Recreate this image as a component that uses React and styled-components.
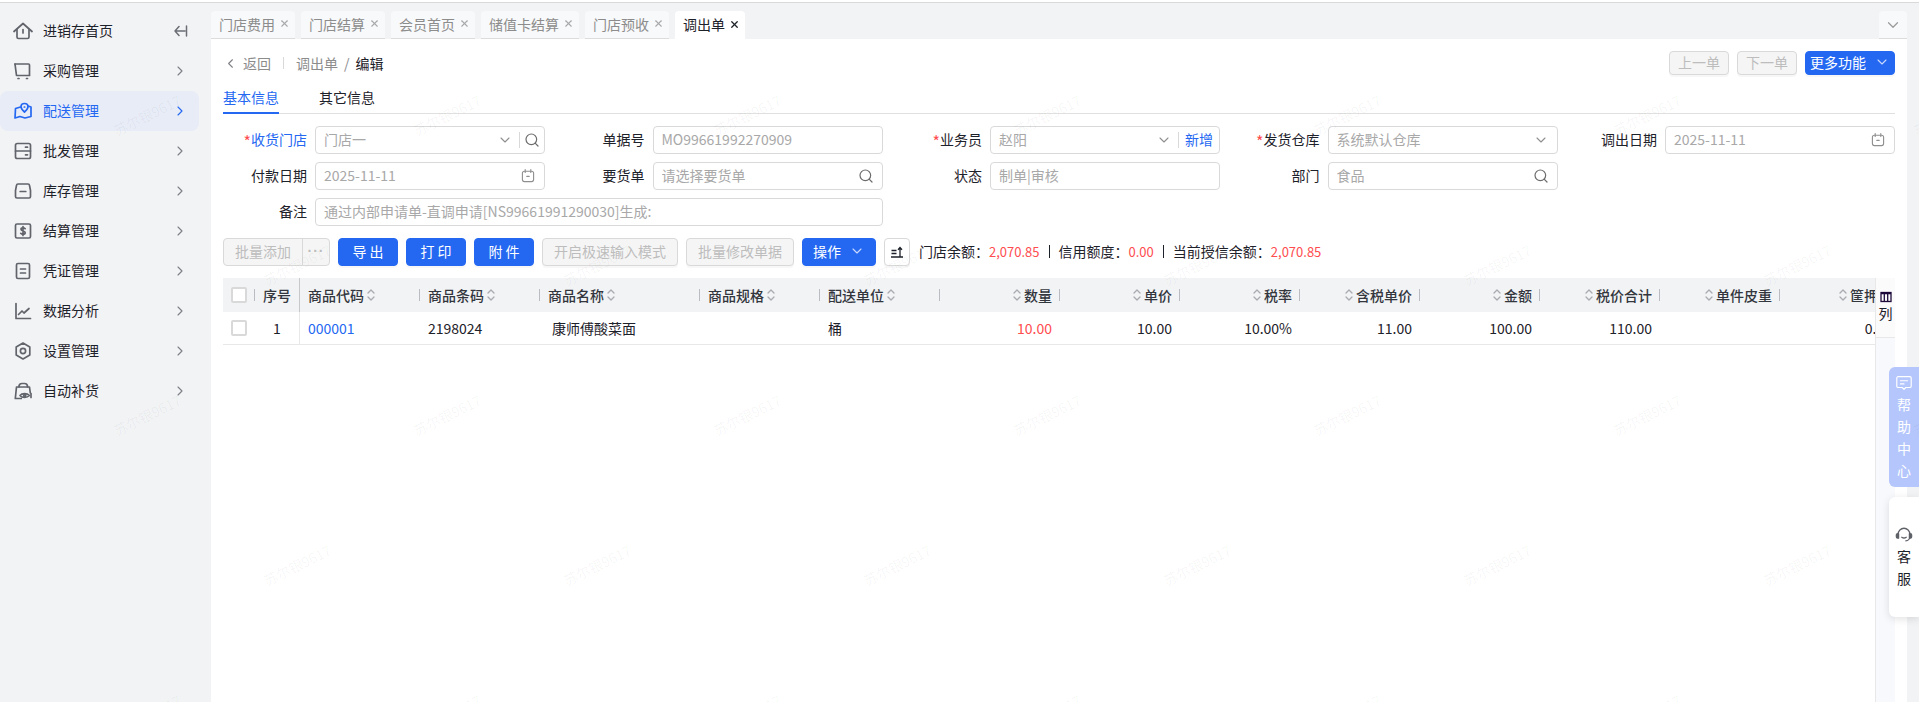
import React from 'react';
import styled, { createGlobalStyle } from 'styled-components';
import { ChevronDown, ChevronLeft, ChevronRight, Search, X } from 'lucide-react';

const GlobalStyle = createGlobalStyle`
  html, body {
    margin: 0;
    padding: 0;
    background: #fff;
    font-family: "Noto Sans CJK SC", "Noto Sans", sans-serif;
    font-size: 14px;
    color: #1d2129;
  }
  * { box-sizing: border-box; }
`;

const BLUE = '#2468f2';
const RED = '#ff4d4f';

const Svg = ({ size = 20, stroke = '#62646c', width = 1.7, children }) => (
  <svg width={size} height={size} viewBox="0 0 20 20" fill="none" stroke={stroke} strokeWidth={width} strokeLinecap="round" strokeLinejoin="round">
    {children}
  </svg>
);

const menuIcons = {
  home: <><path d="M1 10.500 10 2.500l9 8" /><path d="M4 8.500v7.500a1.500 1.500 0 0 0 1.500 1.500h9A1.500 1.500 0 0 0 16 16V8.500" /><path d="M10 8.500v3.500" /></>,
  cart: <><path d="M2 3h13.500a1 1 0 0 1 1 1v10" /><path d="M2 3l1.500 11.500h13" /><path d="M5 17.500h1M13.500 17.500h1" /></>,
  map: <><path d="M7.500 6 2.500 7.500l-.5 9.500 5-1.500 5 1.500 6-1.500V6l-3-1" /><path d="M11.500 2.500c-2 0-3.500 1.500-3.500 3.300 0 2 2 3.900 3.500 5.200 1.500-1.300 3.500-3.200 3.500-5.200 0-1.800-1.500-3.300-3.500-3.300z" /><path d="M11.300 6h.4" /></>,
  server: <><rect x="2.500" y="2.500" width="15" height="15" rx="1.800" /><path d="M2.500 10h15M12.500 13.800h2M12.500 6.200h2" /></>,
  box: <><path d="M5 3h10a1.500 1.500 0 0 1 1.500 1.300l1 5.200v6a1.500 1.500 0 0 1-1.500 1.500H4a1.500 1.500 0 0 1-1.500-1.500v-6l1-5.200A1.500 1.500 0 0 1 5 3z" /><path d="M7.200 10.500h5.600" /></>,
  money: <><rect x="2.500" y="3" width="15" height="14" rx="1.500" /><path d="M12.200 7.700c-.5-.6-1.200-.9-2.200-.9-1.100 0-2 .5-2 1.500 0 2.200 4.200 1.100 4.200 3.400 0 1-.9 1.600-2.200 1.600-1 0-1.800-.4-2.300-1M10 5.500v9" /></>,
  doc: <><rect x="3.500" y="2.500" width="13" height="15" rx="1.500" /><path d="M7.500 8h5M7.500 12h5" /></>,
  chart: <><path d="M3 2.500v15h14.500" /><path d="M5.500 13.500 9 10l2 2 5-4.500" /></>,
  gear: <><path d="M10 2 16.800 6v8L10 18 3.200 14V6z" /><circle cx="10" cy="10" r="2.600" /></>,
  bag: <><path d="M6 6V5a3 3 0 0 1 3-2.500h2.500A3 3 0 0 1 14.500 5v1" /><path d="M3.500 6h13l.8 6M3.500 6 2.300 17.500h6" /><path d="M7 14.500c2-2.500 7-2.500 9.500 0-2.500 2.500-7.500 2.500-9.500 0z" /><circle cx="11.700" cy="14.500" r="1" /><path d="M18 12.500v4" /></>,
};

const menu = [
  ['home', '进销存首页'],
  ['cart', '采购管理'],
  ['map', '配送管理'],
  ['server', '批发管理'],
  ['box', '库存管理'],
  ['money', '结算管理'],
  ['doc', '凭证管理'],
  ['chart', '数据分析'],
  ['gear', '设置管理'],
  ['bag', '自动补货'],
];

const tabs = ['门店费用', '门店结算', '会员首页', '储值卡结算', '门店预收'];

const columns = [
  { key: 'code', title: '商品代码', w: 120, value: '000001', link: true },
  { key: 'bar', title: '商品条码', w: 120, value: '2198024' },
  { key: 'name', title: '商品名称', w: 160, value: '康师傅酸菜面', indent: true },
  { key: 'spec', title: '商品规格', w: 120, value: '' },
  { key: 'unit', title: '配送单位', w: 120, value: '桶' },
  { key: 'qty', title: '数量', w: 120, value: '10.00', right: true, red: true },
  { key: 'price', title: '单价', w: 120, value: '10.00', right: true },
  { key: 'rate', title: '税率', w: 120, value: '10.00%', right: true },
  { key: 'taxp', title: '含税单价', w: 120, value: '11.00', right: true },
  { key: 'amt', title: '金额', w: 120, value: '100.00', right: true },
  { key: 'total', title: '税价合计', w: 120, value: '110.00', right: true },
  { key: 'tare', title: '单件皮重', w: 120, value: '', right: true },
  { key: 'dep', title: '筐押金', w: 120, value: '0.00', right: true },
];

const Page = styled.div`
  position: relative;
  width: 100%;
  height: 702px;
  overflow: hidden;
  display: flex;
  flex-direction: column;
`;

const TopLine = styled.div`
  height: 3px;
  flex: none;
  background: #fff;
  border-bottom: 1px solid #d9d9d9;
`;

const Body = styled.div`
  flex: 1;
  min-height: 0;
  display: flex;
`;

const Sidebar = styled.aside`
  width: 211px;
  flex: none;
  padding-top: 8px;
  background: #f2f3f5;
`;

const MenuItem = styled.div`
  width: 199px;
  height: 40px;
  display: flex;
  align-items: center;
  gap: 10px;
  padding: 0 11px 0 13px;
  border-radius: 8px;
  background: ${(p) => (p.$active ? '#e8ecf7' : 'transparent')};
  color: ${(p) => (p.$active ? BLUE : '#1d2129')};
  span { flex: 1; line-height: 20px; padding-bottom: 2px; }
  svg { flex: none; }
`;

const Main = styled.div`
  flex: 1;
  min-width: 0;
  display: flex;
  flex-direction: column;
  background: #f2f3f5;
`;

const TabBar = styled.div`
  height: 36px;
  flex: none;
  display: flex;
  align-items: flex-end;
  gap: 6px;
  padding-right: 12px;
`;

const Tab = styled.div`
  height: 28px;
  display: flex;
  align-items: center;
  gap: 4px;
  padding: 0 5px 2px 8px;
  border-radius: 4px 4px 0 0;
  background: ${(p) => (p.$active ? '#fff' : '#f8f9fa')};
  border-bottom: ${(p) => (p.$active ? 'none' : '1px solid #dcdcdc')};
  color: ${(p) => (p.$active ? '#1d2129' : '#8c8c8c')};
  line-height: 20px;
`;

const TabMore = styled.div`
  margin-left: auto;
  width: 28px;
  height: 28px;
  display: flex;
  align-items: center;
  justify-content: center;
  border-radius: 4px 4px 0 0;
  background: #f8f9fa;
  border-bottom: 1px solid #dcdcdc;
`;

const Content = styled.main`
  flex: 1;
  min-height: 0;
  margin-right: 12px;
  padding: 12px 12px 0;
  display: flex;
  flex-direction: column;
  background: #fff;
`;

const Breadcrumb = styled.div`
  height: 24px;
  flex: none;
  display: flex;
  align-items: center;
`;

const Back = styled.div`
  display: flex;
  align-items: center;
  gap: 5px;
  color: #8c8c8c;
`;

const Divider = styled.i`
  width: 1px;
  height: 12px;
  margin: 0 12px;
  background: #d9d9d9;
`;

const Crumb = styled.span`
  padding-bottom: 1px;
  color: ${(p) => (p.$current ? '#1d2129' : '#8c8c8c')};
`;

const Slash = styled.span`
  margin: 0 6px;
  color: #8c8c8c;
`;

const NavButtons = styled.div`
  margin-left: auto;
  display: flex;
  gap: 8px;
`;

const Button = styled.button`
  height: ${(p) => p.$h || 28}px;
  width: ${(p) => p.$w}px;
  padding: 0 0 2px;
  display: inline-flex;
  align-items: center;
  justify-content: center;
  gap: ${(p) => p.$gap || 0}px;
  font: inherit;
  border-radius: 4px;
  border: 1px solid ${(p) => (p.$primary ? BLUE : '#d9d9d9')};
  background: ${(p) => (p.$primary ? BLUE : '#f5f5f5')};
  color: ${(p) => (p.$primary ? '#fff' : '#bdbdbd')};
  box-shadow: 0 2px 0 rgba(0, 0, 0, 0.03);
`;

const IconButton = styled(Button)`
  padding: 0;
  background: #fff;
`;

const PageTabs = styled.div`
  height: 39px;
  flex: none;
  display: flex;
  gap: 40px;
  border-bottom: 1px solid #e0e0e0;
`;

const PageTab = styled.div`
  height: 39px;
  padding-top: 12px;
  line-height: 20px;
  color: ${(p) => (p.$active ? BLUE : '#1d2129')};
  border-bottom: 2px solid ${(p) => (p.$active ? BLUE : 'transparent')};
`;

const Form = styled.div`
  margin-top: 12px;
  flex: none;
  display: grid;
  grid-template-columns: repeat(5, 1fr);
  column-gap: 15.5px;
  row-gap: 8px;
`;

const Field = styled.div`
  grid-column: span ${(p) => p.$span || 1};
  display: grid;
  grid-template-columns: 84px 1fr;
  column-gap: 8px;
  align-items: center;
`;

const Label = styled.label`
  padding-bottom: 2px;
  text-align: right;
  white-space: nowrap;
  color: ${(p) => (p.$link ? BLUE : '#1d2129')};
  b { color: ${RED}; font-weight: 400; font-size: 16px; line-height: 14px; vertical-align: -3px; }
`;

const Input = styled.div`
  height: 28px;
  display: flex;
  align-items: center;
  padding: 0 ${(p) => p.$pr || 8}px 0 8px;
  border: 1px solid #d9d9d9;
  border-radius: 4px;
  background: #fff;
  color: #a8a8a8;
  white-space: nowrap;
  span { flex: 1; overflow: hidden; padding-bottom: 2px; }
`;

const Sep = styled.i`
  width: 1px;
  height: 16px;
  margin: 0 ${(p) => p.$after}px 0 6px;
  background: #d9d9d9;
`;

const AddLink = styled.a`
  padding-bottom: 2px;
  color: ${BLUE};
`;

const Actions = styled.div`
  margin-top: 12px;
  flex: none;
  display: flex;
  align-items: center;
  gap: 8px;
`;

const SplitButton = styled.div`
  width: 107px;
  height: 28px;
  display: flex;
  border: 1px solid #d9d9d9;
  border-radius: 4px;
  background: #f5f5f5;
  color: #bdbdbd;
  span { flex: none; width: 79px; line-height: 24px; text-align: center; border-right: 1px solid #d9d9d9; }
  em {
    flex: 1;
    line-height: 24px;
    text-align: center;
    font: 700 14px/24px "Liberation Sans", sans-serif;
    letter-spacing: 1px;
  }
`;

const Balance = styled.div`
  margin-left: 1px;
  padding-bottom: 2px;
  display: flex;
  align-items: center;
  white-space: nowrap;
  strong { color: ${RED}; font-size: 13px; font-weight: 400; margin-right: 9px; }
  i { width: 1px; height: 13px; margin-right: 9px; background: #1d2129; }
`;

const TableWrap = styled.div`
  margin-top: 12px;
  flex: 1;
  min-height: 0;
  display: flex;
`;

const Table = styled.div`
  width: 1652px;
  flex: none;
  overflow: hidden;
`;

const Row = styled.div`
  width: max-content;
  height: ${(p) => (p.$head ? 34 : 33)}px;
  display: flex;
  background: ${(p) => (p.$head ? '#f2f3f5' : '#fff')};
  border-bottom: ${(p) => (p.$head ? 'none' : '1px solid #e8e8e8')};
  font-weight: ${(p) => (p.$head ? 500 : 400)};
  color: ${(p) => (p.$head ? '#33363d' : '#1d2129')};
`;

const Cell = styled.div`
  position: relative;
  width: ${(p) => p.$w}px;
  flex: none;
  padding: 0 8px;
  display: flex;
  align-items: center;
  justify-content: ${(p) => (p.$right ? 'flex-end' : p.$center ? 'center' : 'flex-start')};
  gap: 3px;
  white-space: nowrap;
  border-right: ${(p) => (p.$frozen ? `1px solid ${p.$frozen}` : 'none')};
  color: ${(p) => (p.$red ? RED : p.$link ? BLUE : 'inherit')};

  &::after {
    content: ${(p) => (p.$sep ? '""' : 'none')};
    position: absolute;
    right: 0;
    top: 11px;
    width: 1px;
    height: 12px;
    background: #b9bcc3;
  }
`;

const Indent = styled.span`
  padding-left: 4px;
`;

const Check = styled.i`
  width: 16px;
  height: 16px;
  display: block;
  border: 2px solid #d9d9d9;
  border-radius: 2px;
  background: #fff;
`;

const ColSide = styled.div`
  width: 20px;
  flex: none;
  background: #f8f9fc;
  border-left: 1px solid #e8e8e8;
`;

const ColToggle = styled.div`
  height: 60px;
  padding-top: 13px;
  display: flex;
  flex-direction: column;
  align-items: center;
  background: #fbfbfc;
  border-bottom: 1px solid #e8e8e8;
  color: #1d2129;
  line-height: 20px;
`;

const Float = styled.div`
  position: absolute;
  right: 0;
  top: ${(p) => p.$top}px;
  width: 30px;
  height: 120px;
  display: flex;
  flex-direction: column;
  align-items: center;
  justify-content: center;
  line-height: 22px;
  border-radius: 6px 0 0 6px;
  background: ${(p) => (p.$help ? '#b4c6fc' : '#fff')};
  color: ${(p) => (p.$help ? '#fff' : '#1d2129')};
  box-shadow: ${(p) => (p.$help ? 'none' : '0 2px 8px rgba(0, 0, 0, 0.12)')};
  span { display: block; }
  svg { margin-bottom: 1px; }
`;

const Watermark = styled.div`
  position: absolute;
  left: 0;
  top: -110px;
  width: 2400px;
  pointer-events: none;
  z-index: 5;
`;

const MarkRow = styled.div`
  height: 150px;
  display: flex;
  margin-left: ${(p) => (p.$odd ? 147 : -3)}px;
`;

const Mark = styled.div`
  width: 300px;
  flex: none;
  display: flex;
  align-items: center;
  justify-content: center;
  font-size: 14px;
  color: rgba(0, 0, 0, 0.045);
  transform: rotate(-26deg);
  white-space: nowrap;
`;

const SortIcon = () => (
  <svg width="8" height="12" viewBox="0 0 8 12" fill="none" stroke="#a9abb0" strokeWidth="1.3" strokeLinecap="round" strokeLinejoin="round">
    <path d="M1 4 4 1l3 3M1 8l3 3 3-3" />
  </svg>
);

const CalendarIcon = () => (
  <Svg size={16} stroke="#8f8f8f" width={1.4}>
    <rect x="3" y="4" width="14" height="13" rx="2.500" />
    <path d="M6.500 2v3.500M13.500 2v3.500M8.500 10.500h3" />
  </Svg>
);

const CollapseIcon = () => (
  <svg width="14" height="12" viewBox="0 0 14 12" fill="none" stroke="#6b6e75" strokeWidth="1.5" strokeLinecap="round" strokeLinejoin="round">
    <path d="M1 6h10M5 1.500 1 6l4 4.500M12.500 1v10" />
  </svg>
);

const SortUpIcon = () => (
  <svg width="14" height="14" viewBox="0 0 14 14" fill="none" stroke="#1d2129" strokeWidth="1.3">
    <path d="M1.500 5.500h5M1.500 8.500h5M1 12h12M10 11.500V2.500M8 4.700 10 2.500l2 2.200" />
  </svg>
);

const ColumnsIcon = () => (
  <svg width="12" height="12" viewBox="0 0 12 12" fill="none" stroke="#1d0a3a" strokeWidth="1.3">
    <rect x="1" y="1.500" width="10" height="9" />
    <path d="M1 2.500h10M4.300 2v8.500M7.700 2v8.500" />
  </svg>
);

const HelpIcon = () => (
  <Svg size={18} stroke="#fff" width={1.3}>
    <path d="M3.500 3h13a1.500 1.500 0 0 1 1.500 1.500v9a1.500 1.500 0 0 1-1.500 1.500H12l-2 2-2-2H3.500A1.500 1.500 0 0 1 2 13.500v-9A1.500 1.500 0 0 1 3.500 3z" />
    <path d="M6 7.500h8M6 11h4" />
  </Svg>
);

const HeadsetIcon = () => (
  <Svg size={18} stroke="#5f6168" width={1.4}>
    <path d="M3.500 11V9a6.500 6.500 0 0 1 13 0v3c0 2.500-2 4.500-4.500 4.500" />
    <path d="M3.500 8.500H3A1.500 1.500 0 0 0 1.500 10v2A1.500 1.500 0 0 0 3 13.500h1V8.500zM16.500 8.500h.5A1.500 1.500 0 0 1 18.500 10v2a1.500 1.500 0 0 1-1.500 1.500h-1V8.500z" fill="#5f6168" />
    <path d="M7.500 12.500c1.500 1 3.500 1 5 0" />
  </Svg>
);

const Chevron = ({ color = '#8f8f8f', size = 16 }) => <ChevronDown size={size} color={color} strokeWidth={1.6} />;

const SearchIcon = () => <Search size={16} color="#6b6b6b" strokeWidth={1.8} />;

const FormField = ({ label, required, link, span, pr, children }) => (
  <Field $span={span}>
    <Label $link={link}>{required && <b>*</b>}{label}</Label>
    <Input $pr={pr}>{children}</Input>
  </Field>
);

const App = () => (
  <Page>
    <GlobalStyle />
    <TopLine />
    <Body>
      <Sidebar>
        {menu.map(([icon, title], i) => (
          <MenuItem key={title} $active={i === 2}>
            <Svg stroke={i === 2 ? BLUE : '#62646c'}>{menuIcons[icon]}</Svg>
            <span>{title}</span>
            {i === 0
              ? <CollapseIcon />
              : <ChevronRight size={16} color={i === 2 ? BLUE : '#7d7f85'} strokeWidth={1.7} />}
          </MenuItem>
        ))}
      </Sidebar>
      <Main>
        <TabBar>
          {tabs.map((t) => (
            <Tab key={t}>{t}<X size={11} color="#a9a9a9" strokeWidth={2.4} /></Tab>
          ))}
          <Tab $active>调出单<X size={11} color="#1d2129" strokeWidth={2.8} /></Tab>
          <TabMore><Chevron size={18} color="#9a9a9a" /></TabMore>
        </TabBar>
        <Content>
          <Breadcrumb>
            <Back><ChevronLeft size={15} color="#7d7f85" strokeWidth={1.7} /><Crumb>返回</Crumb></Back>
            <Divider />
            <Crumb>调出单</Crumb>
            <Slash>/</Slash>
            <Crumb $current>编辑</Crumb>
            <NavButtons>
              <Button $h={24} $w={60}>上一单</Button>
              <Button $h={24} $w={60}>下一单</Button>
              <Button $h={24} $w={90} $primary $gap={8}>更多功能<Chevron color="#c9d9fb" size={16} /></Button>
            </NavButtons>
          </Breadcrumb>
          <PageTabs>
            <PageTab $active>基本信息</PageTab>
            <PageTab>其它信息</PageTab>
          </PageTabs>
          <Form>
            <FormField label="收货门店" required link pr={4}>
              <span>门店一</span><Chevron /><Sep $after={4} /><SearchIcon />
            </FormField>
            <FormField label="单据号"><span>MO99661992270909</span></FormField>
            <FormField label="业务员" required pr={6}>
              <span>赵阳</span><Chevron /><Sep $after={6} /><AddLink>新增</AddLink>
            </FormField>
            <FormField label="发货仓库" required>
              <span>系统默认仓库</span><Chevron />
            </FormField>
            <FormField label="调出日期"><span>2025-11-11</span><CalendarIcon /></FormField>
            <FormField label="付款日期"><span>2025-11-11</span><CalendarIcon /></FormField>
            <FormField label="要货单"><span>请选择要货单</span><SearchIcon /></FormField>
            <FormField label="状态"><span>制单|审核</span></FormField>
            <FormField label="部门"><span>食品</span><SearchIcon /></FormField>
            <div />
            <FormField label="备注" span={2}><span>通过内部申请单-直调申请[NS99661991290030]生成:</span></FormField>
          </Form>
          <Actions>
            <SplitButton><span>批量添加</span><em>···</em></SplitButton>
            <Button $w={60} $primary>导 出</Button>
            <Button $w={60} $primary>打 印</Button>
            <Button $w={60} $primary>附 件</Button>
            <Button $w={136}>开启极速输入模式</Button>
            <Button $w={108}>批量修改单据</Button>
            <Button $w={74} $primary $gap={8}>操作<Chevron color="#c9d9fb" size={16} /></Button>
            <IconButton $w={26}><SortUpIcon /></IconButton>
            <Balance>
              门店余额：<strong>2,070.85</strong><i />
              信用额度：<strong>0.00</strong><i />
              当前授信余额：<strong>2,070.85</strong>
            </Balance>
          </Actions>
          <TableWrap>
            <Table>
              <Row $head>
                <Cell $w={32} $sep><Check /></Cell>
                <Cell $w={45} $center $frozen="#c9c9c9">序号</Cell>
                {columns.map((c) => (
                  <Cell key={c.key} $w={c.w} $sep $right={c.right}>
                    {c.right && <SortIcon />}
                    {c.title}
                    {!c.right && <SortIcon />}
                  </Cell>
                ))}
              </Row>
              <Row>
                <Cell $w={32}><Check /></Cell>
                <Cell $w={45} $center $frozen="#e8e8e8">1</Cell>
                {columns.map((c) => (
                  <Cell key={c.key} $w={c.w} $right={c.right} $red={c.red} $link={c.link}>
                    {c.indent ? <Indent>{c.value}</Indent> : c.value}
                  </Cell>
                ))}
              </Row>
            </Table>
            <ColSide>
              <ColToggle><ColumnsIcon /><span>列</span></ColToggle>
            </ColSide>
          </TableWrap>
        </Content>
      </Main>
    </Body>
    <Float $help $top={367}>
      <HelpIcon />
      <span>帮</span><span>助</span><span>中</span><span>心</span>
    </Float>
    <Float $top={497}>
      <HeadsetIcon />
      <span>客</span><span>服</span>
    </Float>
    <Watermark>
      {[0, 1, 2, 3, 4, 5].map((r) => (
        <MarkRow key={r} $odd={r % 2 === 0}>
          {[0, 1, 2, 3, 4, 5, 6].map((c) => <Mark key={c}>苏尔银9617</Mark>)}
        </MarkRow>
      ))}
    </Watermark>
  </Page>
);

export default App;
